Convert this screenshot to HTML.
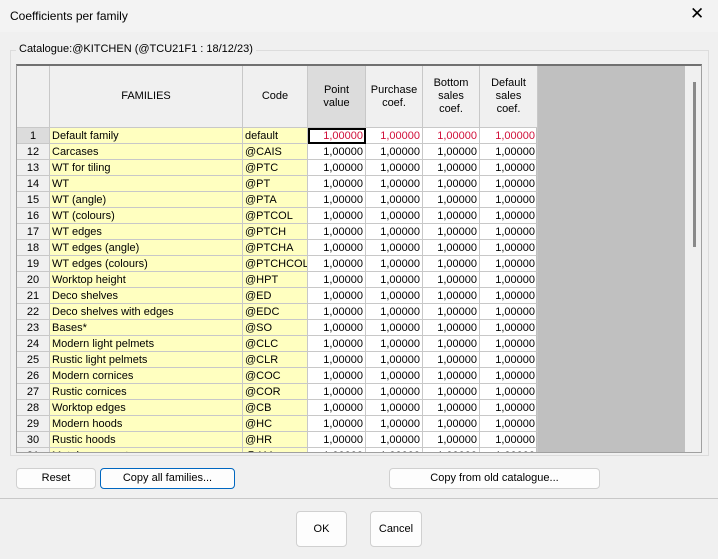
<!DOCTYPE html>
<html><head><style>
*{box-sizing:border-box;margin:0;padding:0}
body{width:718px;height:559px;background:#f0f0f0;font-family:"Liberation Sans",sans-serif;font-size:11px;color:#000;position:relative;overflow:hidden}
.abs{position:absolute}
.title{left:0;top:0;width:718px;height:32px;background:#f3f3f3}
.tt{position:absolute;left:10px;top:9px;font-size:12px}
.close{position:absolute;left:690px;top:4px;font-size:17px}
.grp{left:10px;top:50px;width:699px;height:406px;border:1px solid #dcdcdc}
.grpl{left:16px;top:43px;background:#f0f0f0;padding:0 3px;font-size:11px}
.grid{left:16px;top:64px;width:686px;height:389px;border:1px solid #a0a0a0;border-top:2px solid #707070;background:#fff;overflow:hidden}
.gray{left:519px;top:0;width:149px;height:389px;background:#c0c0c0}
.sb{left:668px;top:0;width:17px;height:389px;background:#f0f0f0}
.thumb{left:676px;top:16px;width:3px;height:165px;background:#8a8a8a}
table{border-collapse:collapse;position:absolute;left:-1px;top:-1px;table-layout:fixed;width:521px}
td{border:1px solid #c8c8c8;height:16px;padding:0 2px;white-space:nowrap;overflow:hidden;line-height:14px}
tr.h td{height:62px;text-align:center;vertical-align:middle;background:#f0f0f0;line-height:13px}
tr.h td.d{background:#dcdcdc}
td.n{text-align:center;background:#f0f0f0}
td.f{background:#ffffc0}
td.c{background:#ffffc0}
td.v{text-align:right}
tr.r td.v{color:#d0103a}
tr.r td.n{background:#dcdcdc}
td.sel{outline:2px solid #000;outline-offset:-2px}
.btn{background:#fdfdfd;border:1px solid #d0d0d0;border-radius:4px;text-align:center;font-size:11px}
.sep{left:0;top:498px;width:718px;height:1px;background:#c8c8c8}
</style></head><body>
<div class="abs title"><span class="tt">Coefficients per family</span><span class="close">✕</span></div>
<div class="abs grp"></div>
<div class="abs grpl">Catalogue:@KITCHEN (@TCU21F1 : 18/12/23)</div>
<div class="abs grid">
<div class="abs gray"></div>
<div class="abs sb"></div>
<div class="abs thumb"></div>
<table>
<colgroup><col style="width:33px"><col style="width:193px"><col style="width:65px"><col style="width:58px"><col style="width:57px"><col style="width:57px"><col style="width:58px"></colgroup>
<tr class="h"><td></td><td>FAMILIES</td><td>Code</td><td class="d">Point<br>value</td><td>Purchase<br>coef.</td><td>Bottom<br>sales<br>coef.</td><td>Default<br>sales<br>coef.</td></tr>
<tr class="r"><td class="n">1</td><td class="f">Default family</td><td class="c">default</td><td class="v sel">1,00000</td><td class="v">1,00000</td><td class="v">1,00000</td><td class="v">1,00000</td></tr>
<tr><td class="n">12</td><td class="f">Carcases</td><td class="c">@CAIS</td><td class="v">1,00000</td><td class="v">1,00000</td><td class="v">1,00000</td><td class="v">1,00000</td></tr>
<tr><td class="n">13</td><td class="f">WT for tiling</td><td class="c">@PTC</td><td class="v">1,00000</td><td class="v">1,00000</td><td class="v">1,00000</td><td class="v">1,00000</td></tr>
<tr><td class="n">14</td><td class="f">WT</td><td class="c">@PT</td><td class="v">1,00000</td><td class="v">1,00000</td><td class="v">1,00000</td><td class="v">1,00000</td></tr>
<tr><td class="n">15</td><td class="f">WT (angle)</td><td class="c">@PTA</td><td class="v">1,00000</td><td class="v">1,00000</td><td class="v">1,00000</td><td class="v">1,00000</td></tr>
<tr><td class="n">16</td><td class="f">WT (colours)</td><td class="c">@PTCOL</td><td class="v">1,00000</td><td class="v">1,00000</td><td class="v">1,00000</td><td class="v">1,00000</td></tr>
<tr><td class="n">17</td><td class="f">WT edges</td><td class="c">@PTCH</td><td class="v">1,00000</td><td class="v">1,00000</td><td class="v">1,00000</td><td class="v">1,00000</td></tr>
<tr><td class="n">18</td><td class="f">WT edges (angle)</td><td class="c">@PTCHA</td><td class="v">1,00000</td><td class="v">1,00000</td><td class="v">1,00000</td><td class="v">1,00000</td></tr>
<tr><td class="n">19</td><td class="f">WT edges (colours)</td><td class="c">@PTCHCOL</td><td class="v">1,00000</td><td class="v">1,00000</td><td class="v">1,00000</td><td class="v">1,00000</td></tr>
<tr><td class="n">20</td><td class="f">Worktop height</td><td class="c">@HPT</td><td class="v">1,00000</td><td class="v">1,00000</td><td class="v">1,00000</td><td class="v">1,00000</td></tr>
<tr><td class="n">21</td><td class="f">Deco shelves</td><td class="c">@ED</td><td class="v">1,00000</td><td class="v">1,00000</td><td class="v">1,00000</td><td class="v">1,00000</td></tr>
<tr><td class="n">22</td><td class="f">Deco shelves with edges</td><td class="c">@EDC</td><td class="v">1,00000</td><td class="v">1,00000</td><td class="v">1,00000</td><td class="v">1,00000</td></tr>
<tr><td class="n">23</td><td class="f">Bases*</td><td class="c">@SO</td><td class="v">1,00000</td><td class="v">1,00000</td><td class="v">1,00000</td><td class="v">1,00000</td></tr>
<tr><td class="n">24</td><td class="f">Modern light pelmets</td><td class="c">@CLC</td><td class="v">1,00000</td><td class="v">1,00000</td><td class="v">1,00000</td><td class="v">1,00000</td></tr>
<tr><td class="n">25</td><td class="f">Rustic light pelmets</td><td class="c">@CLR</td><td class="v">1,00000</td><td class="v">1,00000</td><td class="v">1,00000</td><td class="v">1,00000</td></tr>
<tr><td class="n">26</td><td class="f">Modern cornices</td><td class="c">@COC</td><td class="v">1,00000</td><td class="v">1,00000</td><td class="v">1,00000</td><td class="v">1,00000</td></tr>
<tr><td class="n">27</td><td class="f">Rustic cornices</td><td class="c">@COR</td><td class="v">1,00000</td><td class="v">1,00000</td><td class="v">1,00000</td><td class="v">1,00000</td></tr>
<tr><td class="n">28</td><td class="f">Worktop edges</td><td class="c">@CB</td><td class="v">1,00000</td><td class="v">1,00000</td><td class="v">1,00000</td><td class="v">1,00000</td></tr>
<tr><td class="n">29</td><td class="f">Modern hoods</td><td class="c">@HC</td><td class="v">1,00000</td><td class="v">1,00000</td><td class="v">1,00000</td><td class="v">1,00000</td></tr>
<tr><td class="n">30</td><td class="f">Rustic hoods</td><td class="c">@HR</td><td class="v">1,00000</td><td class="v">1,00000</td><td class="v">1,00000</td><td class="v">1,00000</td></tr>
<tr><td class="n">31</td><td class="f">Metal ornaments</td><td class="c">@AM</td><td class="v">1,00000</td><td class="v">1,00000</td><td class="v">1,00000</td><td class="v">1,00000</td></tr>
</table>
</div>
<div class="abs btn" style="left:16px;top:468px;width:80px;height:21px;line-height:19px">Reset</div>
<div class="abs btn" style="left:100px;top:468px;width:135px;height:21px;line-height:19px;border-color:#0067c0">Copy all families...</div>
<div class="abs btn" style="left:389px;top:468px;width:211px;height:21px;line-height:19px">Copy from old catalogue...</div>
<div class="abs sep"></div>
<div class="abs btn" style="left:296px;top:511px;width:51px;height:36px;line-height:34px">OK</div>
<div class="abs btn" style="left:370px;top:511px;width:52px;height:36px;line-height:34px">Cancel</div>
</body></html>
